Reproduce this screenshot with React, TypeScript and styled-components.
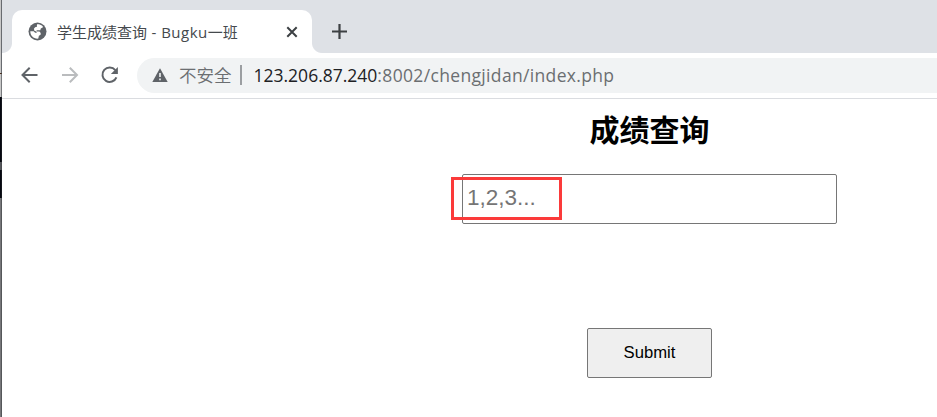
import React from "react";
import styled, { createGlobalStyle } from "styled-components";

const GlobalStyle = createGlobalStyle`
  * { box-sizing: border-box; }
  body { margin: 0; background: #fff; overflow: hidden; }
`;

const uiFont = `"Open Sans", "Noto Sans CJK SC", sans-serif`;

const Screen = styled.div`
  display: flex;
  width: 937px;
  height: 417px;
  overflow: hidden;
  background: #fff;
`;

const WindowEdge = styled.div`
  flex: none;
  display: flex;
  flex-direction: column;
  width: 2px;
`;

const EdgePart = styled.div<{ $height: number; $left: string; $right: string }>`
  flex: none;
  height: ${(p) => p.$height}px;
  background: linear-gradient(to right, ${(p) => p.$left} 1px, ${(p) => p.$right} 1px);
`;

const Browser = styled.div`
  flex: 1;
  min-width: 0;
  display: flex;
  flex-direction: column;
`;

const TabStrip = styled.div`
  flex: none;
  display: flex;
  align-items: flex-end;
  height: 53px;
  background: #dee1e6;
`;

const TabFlare = styled.div<{ $side: "left" | "right" }>`
  width: 10px;
  height: 10px;
  background: radial-gradient(
    circle at ${(p) => (p.$side === "left" ? "0 0" : "100% 0")},
    #dee1e6 9.5px,
    #fff 10.5px
  );
`;

const Tab = styled.div`
  display: flex;
  align-items: center;
  width: 300px;
  height: 43px;
  padding: 0 12px 0 16px;
  border-radius: 10px 10px 0 0;
  background: #fff;
`;

const TabTitle = styled.div`
  flex: 1;
  display: flex;
  margin: 1px 0 0 10px;
  font: 15px/20px ${uiFont};
  color: #45494d;
  white-space: pre;
`;

const TitleLatin = styled.span`
  letter-spacing: 0.5px;
`;

const Icon = styled.svg`
  flex: none;
  display: block;
`;

const NewTab = styled.div`
  display: flex;
  align-items: center;
  height: 43px;
  padding-left: 9px;
`;

const Toolbar = styled.div`
  flex: none;
  display: flex;
  align-items: center;
  height: 46px;
  padding: 0 0 1px 18px;
  border-bottom: 1px solid #dadce0;
`;

const NavButtons = styled.div`
  display: flex;
  gap: 20px;
  width: 117px;
`;

const AddressBar = styled.div`
  flex: 1;
  display: flex;
  align-items: center;
  height: 35px;
  padding-left: 15px;
  border-radius: 18px 0 0 18px;
  background: #f1f3f4;
  font: 17.5px/24px ${uiFont};
  color: #6b6e71;
  white-space: nowrap;
`;

const Security = styled.span`
  margin-left: 11px;
  font-weight: 350;
`;

const Divider = styled.span`
  width: 2px;
  height: 20px;
  margin: 0 12px 0 8px;
  background: #9b9ea1;
`;

const Host = styled.span`
  color: #202124;
`;

const Path = styled.span`
  letter-spacing: 0.34px;
`;

const Page = styled.main`
  flex: 1;
  display: flex;
  flex-direction: column;
  align-items: center;
  padding-left: 360px;
`;

const Heading = styled.h1`
  margin: 9px 0 0;
  font: bold 30px/40px "Noto Sans CJK SC", sans-serif;
  color: #000;
`;

const Field = styled.div`
  position: relative;
  width: 375px;
  height: 50px;
  margin-top: 26px;
`;

const TextInput = styled.input`
  display: block;
  width: 100%;
  height: 100%;
  padding: 0 4px 3px;
  border: 1px solid #767676;
  border-radius: 2px;
  outline: none;
  background: #fff;
  font: 22.5px "Liberation Sans", Arial, sans-serif;
  &::placeholder {
    color: #757575;
    opacity: 1;
  }
`;

const Highlight = styled.div`
  position: absolute;
  left: -11px;
  top: 3px;
  width: 111px;
  height: 43px;
  border: 3px solid #fb3a3a;
`;

const SubmitButton = styled.button`
  width: 125px;
  height: 50px;
  margin-top: 104px;
  padding: 0;
  border: 1px solid #767676;
  border-radius: 2px;
  background: #efefef;
  font: 16.67px "Liberation Sans", Arial, sans-serif;
  color: #000;
`;

const GlobeIcon = () => (
  <Icon width="19" height="19" viewBox="0 0 19 19">
    <circle cx="9.5" cy="9.5" r="9" fill="#5f6368" />
    <path
      d="M9 2.2c2.2-.1 4 .4 5.5 1.7l.5 1.3-2.2 1.4-.5 1.7H8.6v1.1h2.8l1.3 1.6-.1 1.7-1.7 1-.6 2.9c-4.5.4-8.1-2.8-8-7.3h3.3l1.5 1.5h1.8l-.7-1.3-2.1-1.1V6.2l1.5-1.3h1.2Z"
      fill="#fff"
    />
  </Icon>
);

const ArrowIcon = ({ forward = false }: { forward?: boolean }) => (
  <Icon width="20" height="20" viewBox="0 0 20 20" fill="none" stroke={forward ? "#babcbe" : "#5f6368"} strokeWidth="2">
    <path d={forward ? "M2 10H17M9.8 2.8l7.2 7.2-7.2 7.2" : "M17.5 10H2.8M9.7 2.8L2.5 10l7.2 7.2"} />
  </Icon>
);

const ReloadIcon = () => (
  <Icon width="20" height="20" viewBox="0 0 20 20">
    <path d="M15.3 5.2A7.2 7.2 0 1 0 16.4 12.3" fill="none" stroke="#5f6368" strokeWidth="2" />
    <path d="M17.9 2v7h-7Z" fill="#5f6368" />
  </Icon>
);

const WarningIcon = () => (
  <Icon width="16" height="14" viewBox="0 0 16 14">
    <path d="M8 .3 15.7 14H.3Z" fill="#5f6368" />
    <path d="M8 5v4M8 10.5v1.7" stroke="#f1f3f4" strokeWidth="1.6" />
  </Icon>
);

const CloseIcon = () => (
  <Icon width="16" height="16" viewBox="0 0 16 16" stroke="#3c4043" strokeWidth="2">
    <path d="m3.3 3.3 9.4 9.4M12.7 3.3l-9.4 9.4" />
  </Icon>
);

const PlusIcon = () => (
  <Icon width="17" height="17" viewBox="0 0 17 17" stroke="#3c4043" strokeWidth="2.2">
    <path d="M8.5 1v15M1 8.5h15" />
  </Icon>
);

export default function App() {
  return (
    <Screen>
      <GlobalStyle />
      <WindowEdge>
        <EdgePart $height={73} $left="#c8c8c8" $right="#686b70" />
        <EdgePart $height={1} $left="#4b2c1b" $right="#44382f" />
        <EdgePart $height={23} $left="#c8c8c8" $right="#77797c" />
        <EdgePart $height={65} $left="#060810" $right="#14161c" />
        <EdgePart $height={8} $left="#55575b" $right="#4a4c50" />
        <EdgePart $height={28} $left="#060810" $right="#14161c" />
        <EdgePart $height={219} $left="#77777a" $right="#55575a" />
      </WindowEdge>
      <Browser>
        <TabStrip>
          <TabFlare $side="left" />
          <Tab>
            <GlobeIcon />
            <TabTitle>
              学生成绩查询<TitleLatin> - Bugku</TitleLatin>一班
            </TabTitle>
            <CloseIcon />
          </Tab>
          <TabFlare $side="right" />
          <NewTab>
            <PlusIcon />
          </NewTab>
        </TabStrip>
        <Toolbar>
          <NavButtons>
            <ArrowIcon />
            <ArrowIcon forward />
            <ReloadIcon />
          </NavButtons>
          <AddressBar>
            <WarningIcon />
            <Security>不安全</Security>
            <Divider />
            <Host>123.206.87.240</Host>
            <Path>:8002/chengjidan/index.php</Path>
          </AddressBar>
        </Toolbar>
        <Page>
          <Heading>成绩查询</Heading>
          <Field>
            <TextInput type="text" placeholder="1,2,3..." />
            <Highlight />
          </Field>
          <SubmitButton type="button">Submit</SubmitButton>
        </Page>
      </Browser>
    </Screen>
  );
}
